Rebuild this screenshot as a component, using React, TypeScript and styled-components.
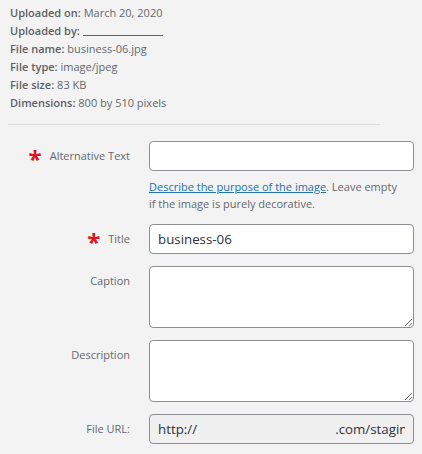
import React from 'react';
import styled, { createGlobalStyle } from 'styled-components';

const GlobalStyle = createGlobalStyle`
  html, body {
    margin: 0;
    padding: 0;
    background: #f3f3f3;
  }
  body {
    font-family: "Segoe UI", "Open Sans", sans-serif;
    font-size: 11px;
    color: #646970;
  }
`;

const Panel = styled.div`
  width: 422px;
  height: 454px;
  overflow: hidden;
  box-sizing: border-box;
  padding: 4px 8px 0 8px;
`;

const MetaList = styled.div`
  padding-left: 2px;
  line-height: 18px;
`;

const MetaLine = styled.div`
  white-space: nowrap;

  strong {
    font-weight: 600;
    color: #5c6166;
  }
`;

const UserLink = styled.a`
  display: inline-block;
  width: 80px;
  height: 13px;
  margin-left: 3px;
  border-bottom: 1px solid #2271b1;
  vertical-align: top;
`;

const Divider = styled.hr`
  width: 372px;
  margin: 12px 0 0 0;
  border: none;
  border-top: 1px solid #dcdcde;
`;

const Form = styled.div`
  display: flex;
  flex-direction: column;
  gap: 12px;
  margin-top: 16px;
`;

const Row = styled.div`
  display: grid;
  grid-template-columns: 122px 265px;
  column-gap: 19px;
  align-items: start;
`;

const Label = styled.label`
  text-align: right;
  padding-top: 7px;
  line-height: 16px;
  white-space: nowrap;
`;

const Required = styled.span`
  display: inline-block;
  color: #e2141a;
  font-size: 24px;
  font-weight: 700;
  line-height: 12px;
  height: 12px;
  vertical-align: -8px;
  margin-right: 8px;
`;

const Field = styled.div`
  display: flex;
  flex-direction: column;
`;

const TextInput = styled.input<{ $readOnly?: boolean }>`
  box-sizing: border-box;
  width: 265px;
  height: 30px;
  margin: 0;
  padding: 0 8px;
  border: 1px solid #8c8f94;
  border-radius: 4px;
  background: ${p => (p.$readOnly ? '#f0f0f1' : '#fff')};
  color: #2c3338;
  font-family: "Segoe UI", "Open Sans", sans-serif;
  font-size: 13.3px;
  outline: none;
`;

const TextArea = styled.textarea`
  box-sizing: border-box;
  width: 265px;
  height: 62px;
  margin: 0;
  padding: 4px 8px;
  border: 1px solid #8c8f94;
  border-radius: 4px;
  background: #fff;
  color: #2c3338;
  font-family: "Segoe UI", "Open Sans", sans-serif;
  font-size: 13.3px;
  outline: none;
  display: block;
`;

const Help = styled.p`
  margin: 7px 0 0 0;
  line-height: 17px;
  font-size: 11px;
  color: #646970;
  white-space: nowrap;

  a {
    color: #2271b1;
    text-decoration: underline;
  }
`;

const meta = [
  { label: 'File name:', value: 'business-06.jpg' },
  { label: 'File type:', value: 'image/jpeg' },
  { label: 'File size:', value: '83 KB' },
  { label: 'Dimensions:', value: '800 by 510 pixels' },
];

const fileUrl = 'http://' + ' '.repeat(40) + '.com/staging/wp-content/uploads/2020/03/business-06.jpg';

export default function App() {
  return (
    <>
      <GlobalStyle />
      <Panel>
        <MetaList>
          <MetaLine>
            <strong>Uploaded on:</strong> March 20, 2020
          </MetaLine>
          <MetaLine>
            <strong>Uploaded by:</strong>
            <UserLink href="#" aria-label="Uploader" />
          </MetaLine>
          {meta.map(m => (
            <MetaLine key={m.label}>
              <strong>{m.label}</strong> {m.value}
            </MetaLine>
          ))}
        </MetaList>

        <Divider />

        <Form>
          <Row>
            <Label>
              <Required>*</Required>Alternative Text
            </Label>
            <Field>
              <TextInput type="text" defaultValue="" />
              <Help>
                <a href="#">Describe the purpose of the image</a>. Leave empty
                <br />
                if the image is purely decorative.
              </Help>
            </Field>
          </Row>
          <Row>
            <Label>
              <Required>*</Required>Title
            </Label>
            <TextInput type="text" defaultValue="business-06" />
          </Row>
          <Row>
            <Label>Caption</Label>
            <TextArea />
          </Row>
          <Row>
            <Label>Description</Label>
            <TextArea />
          </Row>
          <Row>
            <Label>File URL:</Label>
            <TextInput type="text" readOnly $readOnly defaultValue={fileUrl} />
          </Row>
        </Form>
      </Panel>
    </>
  );
}
